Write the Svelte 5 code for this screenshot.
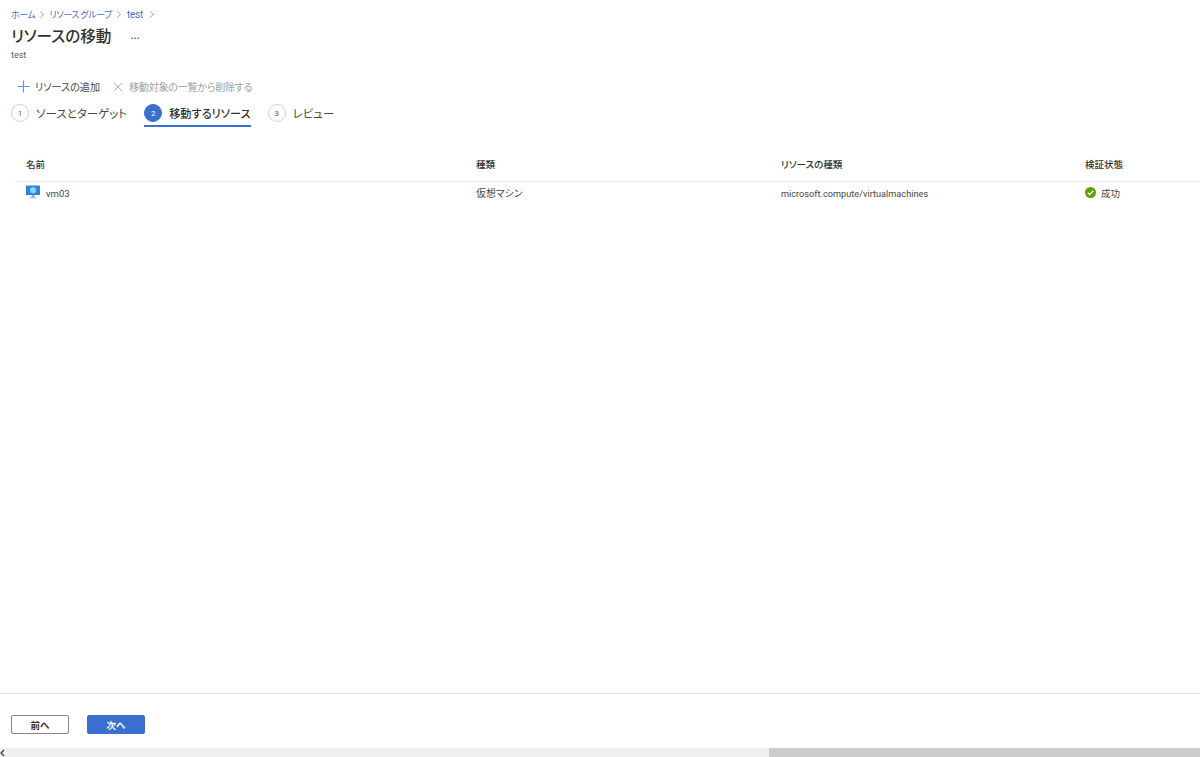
<script>
  const steps = [
    { n: 1, label: 'ソースとターゲット' },
    { n: 2, label: '移動するリソース', active: true },
    { n: 3, label: 'レビュー' }
  ]
  const crumbs = ['ホーム', 'リソース グループ', 'test']
</script>

<div class="page">
  <main class="content">
    <nav class="crumbs">
      {#each crumbs as c}
        <a href="#top" class:latin={c === 'test'}>{c}</a>
        <svg class="chev" viewBox="0 0 8 10" width="6" height="9"><path d="M1.5 1 L6 5 L1.5 9" fill="none" stroke="#8a8886" stroke-width="1"/></svg>
      {/each}
    </nav>
    <div class="title-row">
      <h1>リソースの移動</h1>
      <span class="more">...</span>
    </div>
    <div class="subtitle">test</div>

    <div class="toolbar">
      <button class="tool">
        <svg viewBox="0 0 14 14" width="13" height="13"><path d="M7 0.5 V13.5 M0.5 7 H13.5" stroke="#5b9bd5" stroke-width="1.2" fill="none"/></svg>
        <span>リソースの追加</span>
      </button>
      <button class="tool disabled">
        <svg viewBox="0 0 12 12" width="10" height="10"><path d="M1 1 L11 11 M11 1 L1 11" stroke="#a6a6a6" stroke-width="1.1" fill="none"/></svg>
        <span>移動対象の一覧から削除する</span>
      </button>
    </div>

    <div class="steps">
      {#each steps as s}
        <div class="step" class:active={s.active}>
          <span class="num">{s.n}</span>
          <span class="label">{s.label}</span>
        </div>
      {/each}
    </div>

    <div class="table">
      <div class="row head">
        <div>名前</div>
        <div>種類</div>
        <div>リソースの種類</div>
        <div>検証状態</div>
      </div>
      <div class="row body">
        <div class="name">
          <svg viewBox="0 0 14 14" width="14" height="14">
            <rect x="0" y="0.5" width="14" height="9.5" rx="0.6" fill="#2f86d8"/>
            <circle cx="7" cy="5.2" r="3" fill="#8fd3f7"/>
            <rect x="5.6" y="10" width="2.8" height="2" fill="#9aa3ab"/>
            <rect x="3.8" y="12" width="6.4" height="1.2" fill="#b4bbc2"/>
          </svg>
          <span>vm03</span>
        </div>
        <div class="kind">仮想マシン</div>
        <div class="small">microsoft.compute/virtualmachines</div>
        <div class="status">
          <svg viewBox="0 0 12 12" width="11" height="11">
            <circle cx="6" cy="6" r="6" fill="#57a300"/>
            <path d="M3 6.2 L5.2 8.3 L9 4.1" fill="none" stroke="#fff" stroke-width="1.5"/>
          </svg>
          <span>成功</span>
        </div>
      </div>
    </div>
  </main>

  <footer class="footer">
    <button class="btn">前へ</button>
    <button class="btn primary">次へ</button>
  </footer>

  <div class="scrollbar">
    <svg class="arrow" viewBox="0 0 5 9" width="5" height="9"><path d="M4 2 L1 5 L4 8" fill="none" stroke="#333" stroke-width="1.2"/></svg>
    <div class="thumb"></div>
  </div>
</div>

<style>
  :global(body) {
    margin: 0;
    background: #fff;
  }

  .page {
    height: 757px;
    display: flex;
    flex-direction: column;
    overflow: hidden;
    font-family: "Noto Sans CJK JP", "Noto Sans", sans-serif;
    font-feature-settings: "palt";
    font-size: 9.5px;
    color: #484644;
  }

  .content {
    flex: 1;
    min-height: 0;
  }

  .crumbs {
    display: flex;
    align-items: center;
    gap: 4px;
    padding: 6px 0 0 11px;
    height: 16px;
    font-size: 9px;
    letter-spacing: -0.45px;
  }

  .crumbs a {
    color: #4f6bc9;
    text-decoration: none;
  }

  .crumbs a.latin {
    font-family: Roboto, sans-serif;
    font-size: 10px;
    letter-spacing: -0.2px;
    margin: 0 2px 0 1px;
  }

  .title-row {
    display: flex;
    align-items: center;
    gap: 19px;
    padding-left: 11px;
    height: 26px;
    margin-top: 0;
  }

  h1 {
    margin: 0;
    font-size: 15.6px;
    font-weight: 500;
    color: #323130;
  }

  .more {
    font-size: 11px;
    margin-top: -3px;
  }

  .subtitle {
    padding-left: 11px;
    font-size: 9px;
    line-height: 12px;
    margin-top: 1px;
    color: #605e5c;
    font-family: Roboto, sans-serif;
  }

  .toolbar {
    display: flex;
    gap: 13px;
    padding: 18px 0 0 17px;
  }

  .tool {
    display: flex;
    align-items: center;
    gap: 5px;
    padding: 0;
    border: 0;
    background: none;
    height: 15px;
    font: inherit;
    font-feature-settings: "palt";
    font-size: 10.1px;
    color: #484644;
  }

  .tool.disabled {
    gap: 6px;
    letter-spacing: -0.3px;
    color: #a19f9d;
  }

  .steps {
    display: flex;
    gap: 17px;
    padding: 7px 0 0 11px;
  }

  .step {
    display: flex;
    align-items: center;
    gap: 7px;
    height: 24px;
    font-size: 11.5px;
    color: #484644;
    border-bottom: 2px solid transparent;
  }

  .step.active {
    border-bottom-color: #3a6fd0;
    font-size: 11.2px;
    font-weight: 500;
    color: #323130;
  }

  .num {
    width: 16px;
    height: 16px;
    border: 1px solid #c3d3f0;
    border-radius: 50%;
    display: flex;
    align-items: center;
    justify-content: center;
    font-size: 8px;
    color: #605e5c;
    font-weight: 400;
    font-family: Roboto, sans-serif;
  }

  .active .num {
    background: #3a6fd0;
    border-color: #3a6fd0;
    color: #fff;
  }

  .table {
    margin: 20px 0 0 15px;
  }

  .row {
    display: grid;
    grid-template-columns: 450px 305px 304px 1fr;
    padding-left: 11px;
  }

  .head {
    height: 34px;
    align-items: center;
    font-weight: 500;
    color: #323130;
    border-bottom: 1px solid #edebe9;
  }

  .body {
    height: 22px;
    align-items: center;
  }

  .name {
    display: flex;
    align-items: center;
    gap: 6px;
  }

  .name svg {
    margin-top: -2px;
  }

  .name span {
    font-family: Roboto, sans-serif;
  }

  .kind {
    font-size: 9.9px;
  }

  .small {
    font-size: 9.2px;
    font-family: Roboto, sans-serif;
  }

  .status {
    display: flex;
    align-items: center;
    gap: 5px;
  }

  .status svg {
    margin-top: -2px;
  }

  .footer {
    height: 55px;
    box-sizing: border-box;
    border-top: 1px solid #e1dfdd;
    display: flex;
    align-items: center;
    gap: 18px;
    padding: 7px 0 0 11px;
  }

  .btn {
    width: 58px;
    height: 19px;
    padding: 0;
    box-sizing: border-box;
    border: 1px solid #8a8886;
    border-radius: 2px;
    background: #fff;
    font: inherit;
    font-feature-settings: "palt";
    font-weight: 700;
    color: #323130;
  }

  .btn.primary {
    background: #3a6fd0;
    border-color: #3a6fd0;
    color: #fff;
  }

  .scrollbar {
    height: 9px;
    flex: none;
    background: #f0f0f0;
    display: flex;
    justify-content: space-between;
    align-items: stretch;
  }

  .arrow {
    display: block;
  }

  .thumb {
    width: 431px;
    background: #cdcdcd;
  }
</style>
